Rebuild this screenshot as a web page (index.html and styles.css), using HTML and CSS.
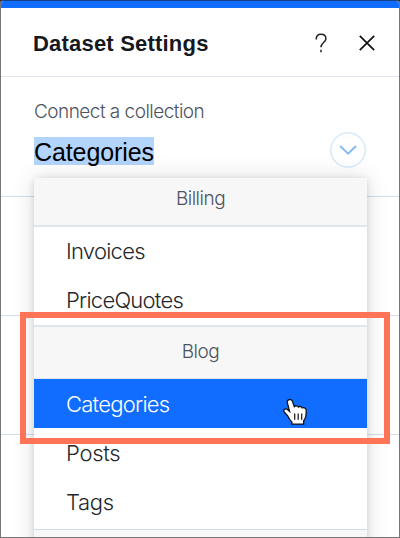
FILE: index.html
```html
<!DOCTYPE html>
<html lang="en">
<head>
  <meta charset="UTF-8">
  <meta name="viewport" content="width=device-width, initial-scale=1.0">
  <title>Dataset Settings</title>
  <link rel="stylesheet" href="styles.css">
</head>
<body>
  <div class="panel">
    <header class="panel-header">
      <h1>Dataset Settings</h1>
      <svg class="help-icon" width="12" height="20" viewBox="0 0 12 20">
        <path d="M1.200 6.500C1.200 3.200 3.100 1.300 6 1.300S10.900 3 10.900 5.700C10.900 9.600 6 9.600 6 14.200M6 16.800v2.400"/>
      </svg>
      <svg class="close-icon" width="16" height="16" viewBox="0 0 16 16">
        <path d="M.8.8l14.400 14.400M15.200.8L.8 15.200"/>
      </svg>
    </header>

    <section class="row collection">
      <label>Connect a collection</label>
      <div class="select">
        <span class="value">Categories</span>
        <svg class="toggle" width="36" height="36" viewBox="0 0 36 36">
          <circle cx="18" cy="18" r="17.200"/>
          <path d="M10.200 14l7.900 7.600L26 14"/>
        </svg>
      </div>

      <!-- opened list -->
      <div class="dropdown">
        <div class="group">Billing</div>
        <div class="option">Invoices</div>
        <div class="option">PriceQuotes</div>
        <div class="group blog">Blog</div>
        <div class="option selected">Categories</div>
        <div class="option posts">Posts</div>
        <div class="option tags">Tags</div>
        <div class="group"></div>
      </div>
    </section>
    <section class="row"></section>
    <section class="row"></section>
  </div>

  <div class="highlight"></div>

  <svg class="cursor" width="26" height="28" viewBox="0 0 26 28">
    <path d="M6 1.700c1.500-.6 2.900.2 3.400 1.700l1.900 5.200c1-1.300 3.500-1 4.100.4 1.200-.9 3.300-.5 3.800.9 2.200-.7 4.200.6 4.100 2.900l-.5 6.300-2.100 3.700v3.300H8.900v-2c-1.800-2-3.200-3.900-4.200-6.200L1.200 14c-1.400-1.900 1-3.900 2.900-2.700l2.500 2.100L4.300 4.700c-.4-1.400.3-2.500 1.700-3z"/>
    <path class="fingers" d="M11.700 15.500v6.200M15.200 15.500v6.200M18.700 15.500v6.200"/>
  </svg>
</body>
</html>
```
FILE: styles.css
```css
* {
  box-sizing: border-box;
}

body {
  margin: 0;
  width: 400px;
  height: 538px;
  overflow: hidden;
  position: relative;
  background: #333;
  font-family: Inter, "Liberation Sans", Arial, sans-serif;
  font-weight: 300;
}

.panel {
  height: 538px;
  position: relative;
  overflow: hidden;
  border: 1px solid #777;
  border-top-color: #153f88;
  border-radius: 4px 4px 0 0;
  background: #fff;
}

.panel-header {
  display: flex;
  align-items: center;
  height: 76px;
  padding: 2px 24px 0 32px;
  border-top: 7px solid #116dff;
  border-bottom: 1px solid #dfe3eb;
}

.panel-header h1 {
  flex: 1;
  margin: 0;
  padding-top: 1px;
  font: bold 22px "Liberation Sans", Arial, sans-serif;
  letter-spacing: 0.2px;
  color: #16181d;
}

.help-icon,
.close-icon,
.toggle {
  fill: none;
}

.help-icon {
  margin-right: 32px;
  stroke: #222;
  stroke-width: 1.5;
}

.close-icon {
  stroke: #111;
  stroke-width: 1.7;
}

.row {
  height: 119px;
  border-bottom: 1px solid #d3deeb;
}

.collection {
  height: 120px;
  padding: 22px 33px 0;
  position: relative;
}

.collection label {
  display: block;
  font-size: 19px;
  line-height: 25px;
  letter-spacing: -0.53px;
  color: #4d535d;
}

.select {
  display: flex;
  align-items: center;
  justify-content: space-between;
  height: 36px;
  margin-top: 8px;
}

.value {
  height: 28px;
  margin-top: 2px;
  background: #b3d4fd;
  color: #000;
  font: 25px/30px "Liberation Sans", Arial, sans-serif;
  letter-spacing: -0.1px;
}

.toggle circle {
  stroke: #cfe7fc;
  stroke-width: 1.3;
}

.toggle path {
  stroke: #80bcf5;
  stroke-width: 2;
}

.dropdown {
  position: absolute;
  z-index: 1;
  top: 101px;
  left: 33px;
  width: 333px;
  height: 400px;
  border-radius: 3px;
  background: #fff;
  box-shadow: 0 0 25px rgba(0, 0, 0, 0.13), 0 1px 7px rgba(0, 0, 0, 0.13);
}

.group {
  height: 49px;
  border-bottom: 2px solid #dfe5ec;
  border-radius: 3px 3px 0 0;
  background: #f7f7f7;
  font-size: 19px;
  line-height: 42px;
  letter-spacing: -0.5px;
  text-align: center;
  color: #4d535d;
}

.group.blog {
  height: 54px;
  border-top: 2px solid #dfe5ec;
  border-bottom-width: 1px;
  border-radius: 0;
  line-height: 49px;
}

.option {
  height: 49px;
  padding-left: 32px;
  font-size: 22px;
  line-height: 49px;
  letter-spacing: -0.75px;
  color: #24272c;
}

.option.selected {
  background: #116dff;
  color: #fff;
  line-height: 50px;
}

.option.posts,
.option.tags {
  line-height: 51px;
  letter-spacing: -0.3px;
}

.option.tags {
  height: 52px;
}

.dropdown .group:last-child {
  border-top: 1px solid #d3dde8;
  border-radius: 0;
}

/* frame around the Blog group */
.highlight {
  position: absolute;
  z-index: 2;
  top: 312px;
  left: 20px;
  width: 370px;
  height: 132px;
  border: 6px solid #ff7356;
}

.cursor {
  position: absolute;
  z-index: 3;
  top: 398px;
  left: 283px;
  fill: #fff;
  stroke: #111;
  stroke-width: 1.3;
}

.cursor .fingers {
  stroke-width: 1.2;
}
```
